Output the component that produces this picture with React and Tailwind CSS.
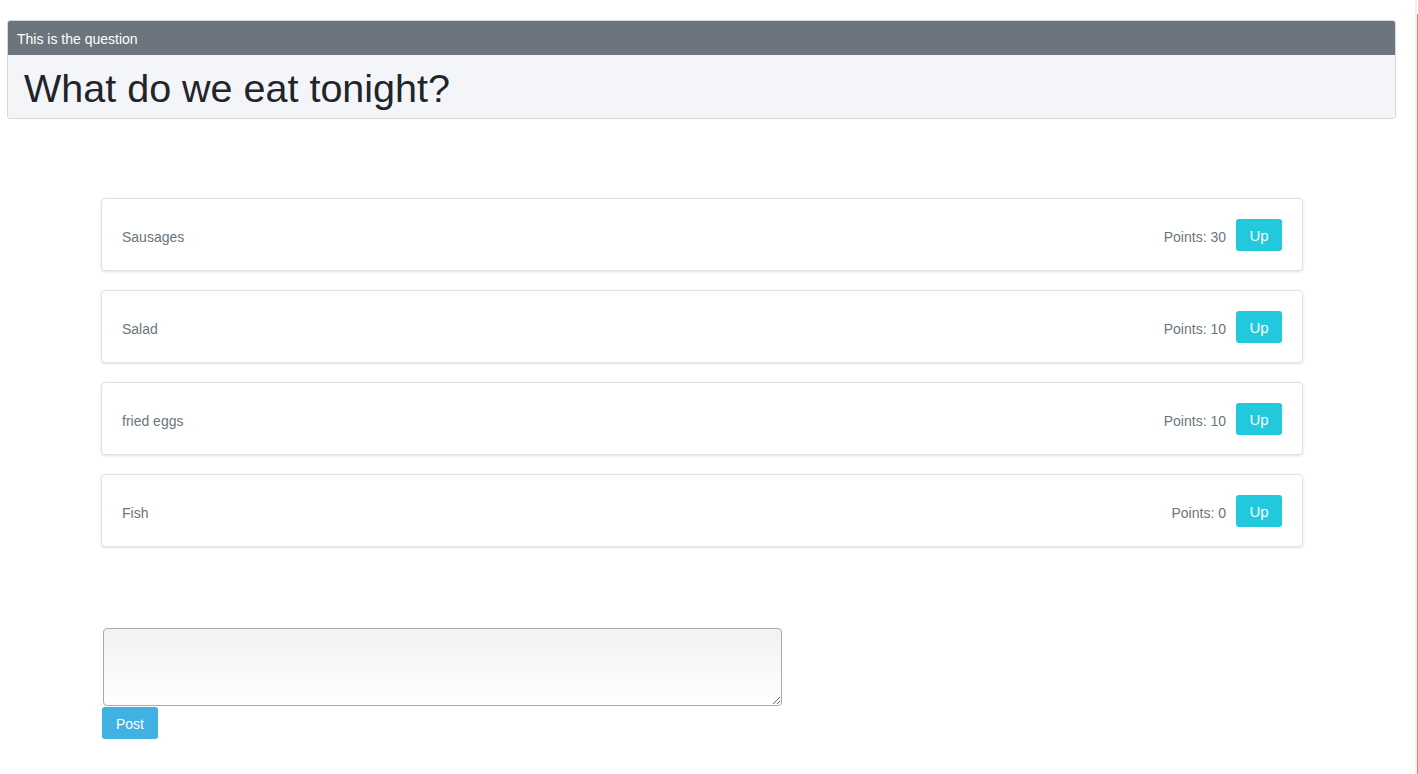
import { useState } from 'react';

const initialAnswers = [
  { id: 1, text: 'Sausages', points: 30 },
  { id: 2, text: 'Salad', points: 10 },
  { id: 3, text: 'fried eggs', points: 10 },
  { id: 4, text: 'Fish', points: 0 },
];

function Answer({ answer, onUp }) {
  return (
    <div className="flex h-[73px] items-center justify-between rounded-[4px] border border-[#e3e3e3] bg-white pl-5 pr-5 shadow-[0_1px_3px_rgba(0,0,0,0.12)]">
      <span className="pt-[6px] text-[14px] text-[#6c757d]">{answer.text}</span>
      <div className="flex items-center gap-[10px]">
        <span className="pt-[6px] text-[14px] text-[#6c757d]">Points: {answer.points}</span>
        <button
          onClick={() => onUp(answer.id)}
          className="mt-[1px] h-[32px] w-[46px] rounded-[3px] bg-[#22c8dc] pt-[3px] text-[15px] text-white"
        >
          Up
        </button>
      </div>
    </div>
  );
}

export default function App() {
  const [answers, setAnswers] = useState(initialAnswers);
  const [draft, setDraft] = useState('');

  const handleUp = (id) => {
    setAnswers(answers.map((a) => (a.id === id ? { ...a, points: a.points + 10 } : a)));
  };

  const handlePost = () => {
    if (!draft.trim()) return;
    setAnswers([...answers, { id: Date.now(), text: draft, points: 0 }]);
    setDraft('');
  };

  return (
    <div className="flex min-h-[774px] bg-white font-['Liberation_Sans',Arial,sans-serif]">
      <div className="flex-1">
        {/* Question card */}
        <div className="ml-[7px] mr-[19px] mt-[20px] overflow-hidden rounded-[3px] border border-[#d6d8dc]">
          <div className="flex h-[34px] items-center bg-[#6c757d] px-[9px] pt-[3px] text-[14px] text-white">
            This is the question
          </div>
          <div className="flex h-[63px] items-center bg-[#f4f5f9] px-[16px] pt-[5px]">
            <h1 className="text-[39.5px] leading-none text-[#212529]">What do we eat tonight?</h1>
          </div>
        </div>

        {/* Answers */}
        <div className="ml-[101px] mt-[79px] flex w-[1202px] flex-col gap-[19px]">
          {answers.map((answer) => (
            <Answer key={answer.id} answer={answer} onUp={handleUp} />
          ))}
        </div>

        {/* New answer */}
        <div className="ml-[102px] mt-[81px] flex flex-col items-start">
          <textarea
            value={draft}
            onChange={(e) => setDraft(e.target.value)}
            className="ml-[1px] h-[78px] w-[679px] rounded-[4px] border border-[#aaaaaa] bg-gradient-to-b from-[#f2f2f2] to-white p-2 text-[14px] outline-none"
          />
          <button
            onClick={handlePost}
            className="mt-[1px] h-[32px] w-[56px] rounded-[3px] bg-[#41b0e3] pt-[3px] text-[14px] text-white"
          >
            Post
          </button>
        </div>
      </div>

      {/* right edge */}
      <div className="flex w-[3px]">
        <div className="w-[2px] bg-[#f0f0f0]" />
        <div className="mt-[14px] w-[1px] bg-[#e2855c]" />
      </div>
    </div>
  );
}
